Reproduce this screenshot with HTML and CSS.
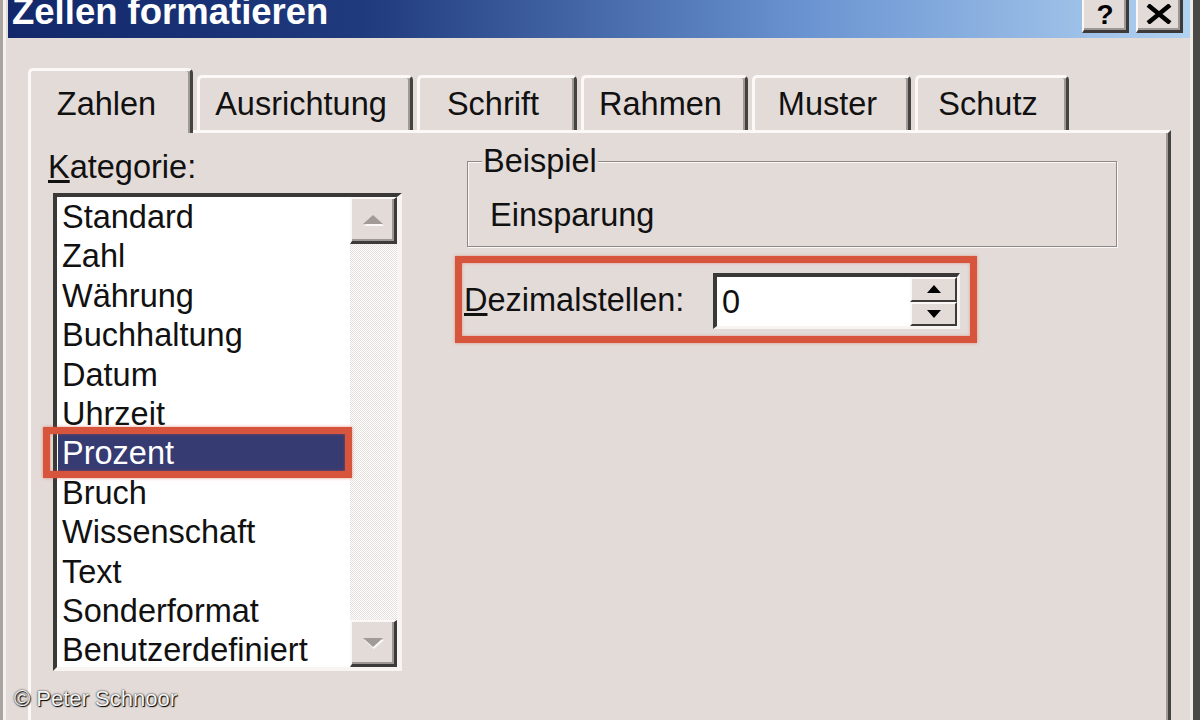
FILE: index.html
```html
<!DOCTYPE html>
<html lang="de">
<head>
<meta charset="utf-8">
<title>Zellen formatieren</title>
<link rel="stylesheet" href="styles.css">
</head>
<body>
<div class="window">
  <div class="titlebar">
    <span class="title">Zellen formatieren</span>
    <div class="tbtns">
      <div class="tbtn help">?</div>
      <div class="tbtn close">
        <svg width="26" height="20" viewBox="0 0 26 20"><path d="M2 1 L24 19 M24 1 L2 19" stroke="#000" stroke-width="4.5" fill="none"/></svg>
      </div>
    </div>
  </div>
  <div class="client">
    <div class="tabs">
      <div class="tab active w-zahlen">Zahlen</div>
      <div class="tab w-aus">Ausrichtung</div>
      <div class="tab w-schrift">Schrift</div>
      <div class="tab w-rahmen">Rahmen</div>
      <div class="tab w-muster">Muster</div>
      <div class="tab w-schutz">Schutz</div>
    </div>
    <div class="panel">
      <div class="col-left">
        <div class="label"><u>K</u>ategorie:</div>
        <div class="listbox">
          <ul class="items">
            <li>Standard</li>
            <li>Zahl</li>
            <li>Währung</li>
            <li>Buchhaltung</li>
            <li>Datum</li>
            <li>Uhrzeit</li>
            <li class="sel">Prozent</li>
            <li>Bruch</li>
            <li>Wissenschaft</li>
            <li>Text</li>
            <li>Sonderformat</li>
            <li>Benutzerdefiniert</li>
          </ul>
          <div class="vscroll">
            <div class="sbtn">
              <svg width="24" height="13" viewBox="0 0 24 13"><polygon points="12,2 22,11 2,11" fill="#fbf8f7" transform="translate(1,1)"/><polygon points="12,1 22,10 2,10" fill="#a19b98"/></svg>
            </div>
            <div class="track"></div>
            <div class="sbtn">
              <svg width="24" height="13" viewBox="0 0 24 13"><polygon points="2,2 22,2 12,11" fill="#fbf8f7" transform="translate(1,1)"/><polygon points="2,1 22,1 12,10" fill="#a19b98"/></svg>
            </div>
          </div>
        </div>
      </div>
      <div class="col-right">
        <fieldset class="group">
          <legend>Beispiel</legend>
          <div class="sample">Einsparung</div>
        </fieldset>
        <div class="highlight">
          <label class="dez-label"><u>D</u>ezimalstellen:</label>
          <div class="spin">
            <span class="spin-val">0</span>
            <div class="spin-btns">
              <div class="spin-btn"><svg width="14" height="8" viewBox="0 0 14 8"><polygon points="7,0 14,8 0,8" fill="#000"/></svg></div>
              <div class="spin-btn"><svg width="14" height="8" viewBox="0 0 14 8"><polygon points="0,0 14,0 7,8" fill="#000"/></svg></div>
            </div>
          </div>
        </div>
      </div>
    </div>
  </div>
  <div class="credit">© Peter Schnoor</div>
</div>
</body>
</html>
```

FILE: styles.css
```css
body {
  margin: 0;
  width: 1200px;
  height: 720px;
  overflow: hidden;
  background: #e3dbd8;
  font-family: "Liberation Sans", Arial, sans-serif;
  color: #111;
}

.window {
  position: relative;
  height: 720px;
  box-sizing: border-box;
  border-left: 3px solid #aaa4a1;
  border-right: 7px solid #4a4747;
  padding-left: 5px;
  box-shadow: inset 3px 0 0 #f5f1ef, inset -3px 0 0 #efebe9;
  display: flex;
  flex-direction: column;
  overflow: hidden;
}

.titlebar {
  height: 38px;
  flex: none;
  margin-right: 3px;
  background: linear-gradient(90deg, #12286b 0%, #1f3a7d 30%, #6b95d2 68%, #b2d2f1 100%);
  display: flex;
  justify-content: space-between;
  align-items: flex-start;
  overflow: hidden;
}

.title {
  color: #fff;
  font-weight: bold;
  font-size: 36.5px;
  line-height: 36.5px;
  margin-top: -6px;
  padding-left: 4px;
  white-space: nowrap;
}

.tbtns {
  display: flex;
  gap: 7px;
  margin-right: 7px;
}

.tbtn {
  width: 47px;
  height: 33px;
  box-sizing: border-box;
  background: #e3dbd8;
  border-left: 2px solid #fbf8f7;
  border-right: 3px solid #3d3a3a;
  border-bottom: 3px solid #3d3a3a;
  box-shadow: inset -2px -2px 0 #9e9895;
  display: flex;
  align-items: center;
  justify-content: center;
  font-weight: bold;
  font-size: 28px;
  line-height: 28px;
  color: #000;
}

.tbtn.close svg {
  margin-bottom: 3px;
}

.client {
  display: flex;
  flex-direction: column;
  flex: 1;
  min-height: 0;
}

.tabs {
  display: flex;
  flex: none;
  align-items: flex-end;
  gap: 4px;
  height: 62px;
  margin-top: 30px;
  margin-left: 20px;
}

.tab {
  box-sizing: border-box;
  height: 55px;
  padding: 7px 8px 0 0;
  text-align: center;
  font-size: 32.5px;
  line-height: 38px;
  white-space: nowrap;
  border-top: 3px solid #fbf8f7;
  border-left: 3px solid #fbf8f7;
  border-right: 3px solid #454242;
  border-radius: 5px 5px 0 0;
  box-shadow: inset -2px 0 0 #a09a97;
}

.tab.active {
  height: 65px;
  padding-top: 14px;
  margin-bottom: -3px;
  position: relative;
  z-index: 2;
  background: #e3dbd8;
}

.w-zahlen { width: 165px; }
.w-aus { width: 216px; }
.w-schrift { width: 160px; }
.w-rahmen { width: 167px; }
.w-muster { width: 159px; }
.w-schutz { width: 154px; }

.panel {
  margin-left: 20px;
  width: 1143px;
  box-sizing: border-box;
  flex: 1;
  border-top: 3px solid #fbf8f7;
  border-left: 3px solid #fbf8f7;
  border-right: 3px solid #454242;
  box-shadow: inset -2px 0 0 #a09a97;
  display: grid;
  grid-template-columns: 424px 1fr;
  align-items: start;
}

.col-left {
  padding: 15px 0 0 17px;
}

.label {
  font-size: 32.5px;
  line-height: 38px;
}

.listbox {
  margin: 7px 0 0 5px;
  width: 349px;
  height: 478px;
  box-sizing: border-box;
  border-style: solid;
  border-width: 4px 5px 4px 4px;
  border-color: #3b3838 #f7f4f2 #f7f4f2 #3b3838;
  background: #fff;
  display: flex;
}

.items {
  list-style: none;
  margin: 0;
  padding: 1px 0 0 0;
  flex: 1;
}

.items li {
  font-size: 32.5px;
  line-height: 39.4px;
  padding-left: 4px;
  margin-left: 1px;
  white-space: nowrap;
}

.items li.sel {
  position: relative;
  background: #363b72;
  color: #fff;
}

.items li.sel::after {
  content: "";
  position: absolute;
  left: -15px;
  right: -2px;
  top: -7px;
  bottom: -4px;
  border: 7px solid #d6553c;
  box-shadow: 0 0 3px rgba(214, 85, 60, 0.6), inset 0 0 3px rgba(214, 85, 60, 0.6);
}

.vscroll {
  width: 47px;
  display: flex;
  flex-direction: column;
}

.track {
  flex: 1;
  background: repeating-conic-gradient(#ffffff 0 25%, #e6e0dd 0 50%) 0 0 / 2px 2px;
}

.sbtn {
  height: 47px;
  box-sizing: border-box;
  background: #e3dbd8;
  border-top: 2px solid #fbf8f7;
  border-left: 2px solid #fbf8f7;
  border-right: 3px solid #3d3a3a;
  border-bottom: 3px solid #3d3a3a;
  box-shadow: inset -2px -2px 0 #9e9895;
  display: flex;
  align-items: center;
  justify-content: center;
}

.col-right {
  padding-top: 9px;
}

.group {
  margin: 0 0 0 12px;
  width: 650px;
  box-sizing: border-box;
  border: 1px solid #8e8986;
  box-shadow: inset 1px 1px 0 #fbf8f7, 1px 1px 0 #fbf8f7;
  padding: 0 0 12px 14px;
}

.group legend {
  font-size: 32.5px;
  line-height: 38px;
  padding: 0 1px;
  background: #e3dbd8;
}

.sample {
  font-size: 32.5px;
  line-height: 38px;
  margin: 16px 0 0 8px;
}

.highlight {
  margin-top: 9px;
  width: 522px;
  height: 87px;
  box-sizing: border-box;
  border: 7px solid #d6553c;
  box-shadow: 0 0 3px rgba(214, 85, 60, 0.5), inset 0 0 3px rgba(214, 85, 60, 0.5);
  display: flex;
  align-items: center;
  padding-left: 2px;
}

.dez-label {
  width: 249px;
  font-size: 32.5px;
  line-height: 38px;
}

.spin {
  width: 247px;
  height: 56px;
  box-sizing: border-box;
  align-self: flex-end;
  margin-bottom: 7px;
  border-style: solid;
  border-width: 4px 3px 3px 4px;
  border-color: #3b3838 #f7f4f2 #f7f4f2 #3b3838;
  background: #fff;
  display: flex;
  align-items: center;
  justify-content: space-between;
}

.spin-val {
  padding-left: 5px;
  font-size: 32.5px;
  line-height: 38px;
}

.spin-btns {
  width: 47px;
  align-self: stretch;
  display: flex;
  flex-direction: column;
}

.spin-btn {
  flex: 1;
  box-sizing: border-box;
  background: #e3dbd8;
  border-top: 2px solid #fbf8f7;
  border-left: 2px solid #fbf8f7;
  border-right: 2px solid #3d3a3a;
  border-bottom: 2px solid #3d3a3a;
  display: flex;
  align-items: center;
  justify-content: center;
}

.credit {
  position: absolute;
  left: 11px;
  top: 688px;
  font-size: 22px;
  line-height: 22px;
  color: #f4f4f4;
  white-space: nowrap;
  text-shadow: 0 0 2px #000, 1px 1px 1px #000;
}
```
